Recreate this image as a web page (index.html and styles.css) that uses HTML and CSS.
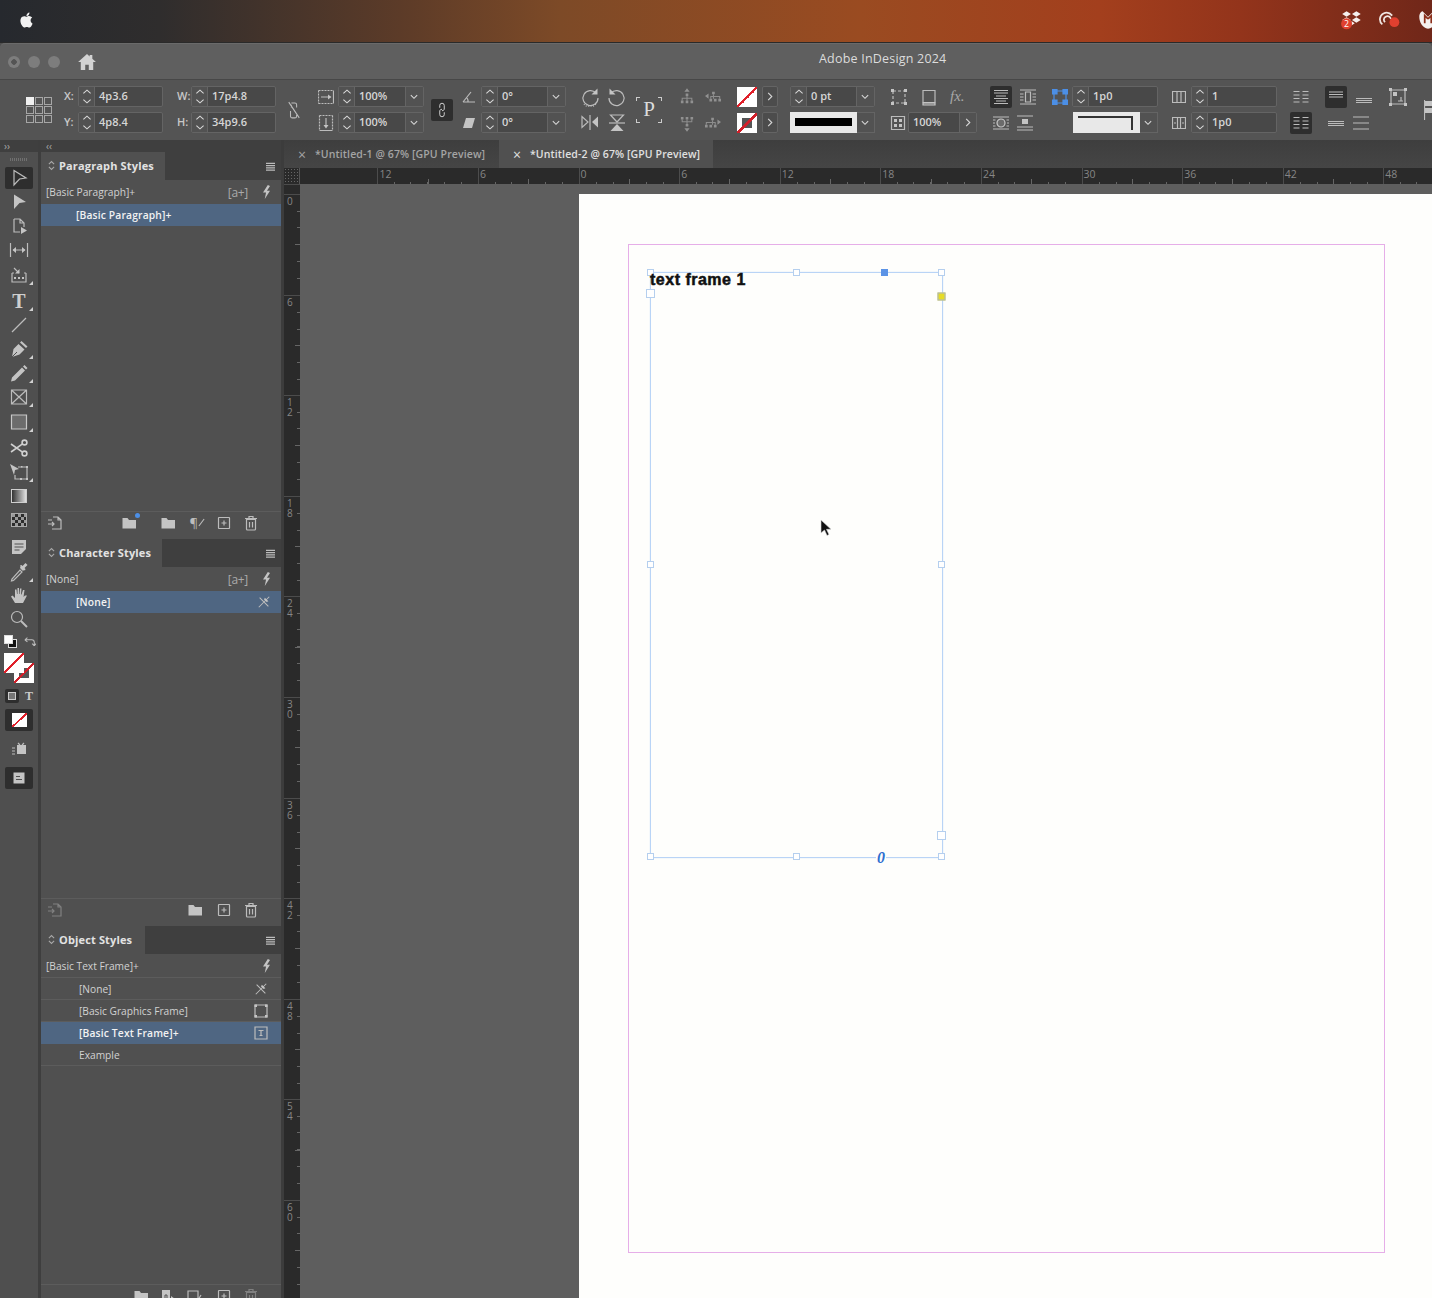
FILE: index.html
```html
<!DOCTYPE html>
<html lang="en">
<head>
    <meta charset="UTF-8">
    <title>Adobe InDesign 2024</title>
    <link rel="stylesheet" href="styles.css">
</head>
<body>
    <svg class="defs" width="0" height="0">
        <symbol id="i-step" viewBox="0 0 16 21"><path d="M4 7l4-3.500L12 7M4 14l4 3.500L12 14"/></symbol>
        <symbol id="i-down" viewBox="0 0 16 21"><path d="M4.500 9l3.500 3.500L11.500 9"/></symbol>
        <symbol id="i-right" viewBox="0 0 16 21"><path d="M6 6.500l4 4-4 4"/></symbol>
        <symbol id="i-menu" viewBox="0 0 12 10"><path d="M1 1.500h10M1 4h10M1 6.500h10M1 9h10"/></symbol>
        <symbol id="i-bolt" viewBox="0 0 14 16"><path class="solid" d="M8.500 0L3 8.500h3.500L5 16l6-9.500H7.500L11 1z"/></symbol>
        <symbol id="i-new" viewBox="0 0 16 16"><path d="M3 2.500h10a.5.5 0 0 1 .5.5v10a.5.5 0 0 1-.5.5H3a.5.5 0 0 1-.5-.5V3a.5.5 0 0 1 .5-.5zM8 5.500v5M5.500 8h5"/></symbol>
        <symbol id="i-trash" viewBox="0 0 16 16"><path d="M3.500 4.500h9v9.500a1 1 0 0 1-1 1h-7a1 1 0 0 1-1-1zM2 3.500h12M6 3.500V1.500h4v2M6.500 7v5.500M9.500 7v5.500"/></symbol>
        <symbol id="i-folder" viewBox="0 0 16 16"><path class="solid" d="M1.500 3h5l1.500 2h7v8.500h-13.500z"/></symbol>
        <symbol id="i-load" viewBox="0 0 16 16"><path d="M6 2h5l3 3v9H5M11 2v3h3M1 9h6M5 7l2 2-2 2M1 5h4"/></symbol>
        <symbol id="i-clear" viewBox="0 0 16 16"><path d="M2 14L14 2M3 3l10 10"/><path class="solid" d="M9 3l4 4-2 1-3-3z"/></symbol>
        <symbol id="i-doc" viewBox="0 0 16 16"><path class="solid" d="M2 2h8v12H2z"/><path class="cut" d="M5 7h2v4H5z"/><path class="solid" d="M11 8l4 3-1 3h-3z"/></symbol>
        <symbol id="i-check" viewBox="0 0 16 16"><path d="M1 3h10v11H1zM11 12l3-5"/></symbol>
        <symbol id="t-sel" viewBox="0 0 20 20"><path d="M5 2.500L17 10l-6.500 1L5 17z"/></symbol>
        <symbol id="t-direct" viewBox="0 0 20 20"><path class="solid" d="M5 2.500L17 10l-6.500 1L5 17z"/></symbol>
        <symbol id="t-page" viewBox="0 0 20 20"><path d="M5 3h6l4 4v4M11 3v4h4M5 3v13h6"/><path class="solid" d="M12 11l6 3.500-6 3.500z"/></symbol>
        <symbol id="t-gap" viewBox="0 0 20 20"><path d="M1.500 3v14M18.500 3v14M4 10h12"/><path class="solid" d="M7 7v6l-3.500-3zM13 7v6l3.500-3z"/></symbol>
        <symbol id="t-collect" viewBox="0 0 20 20"><path d="M3 8v9h14V8M3 8h2M15 8h2M5 3l5 5"/><path class="solid" d="M10.500 8.500V4l-4.500 4.500zM5 12h2v2H5zM9 12h2v2H9zM13 12h2v2h-2z"/></symbol>
        <symbol id="t-line" viewBox="0 0 20 20"><path d="M3 17L17 3"/></symbol>
        <symbol id="t-pen" viewBox="0 0 20 20"><path class="solid" d="M3 18l1.500-8 5-5 6 5.500-5 5zM11 3.500l1.500-1.500 6 5.500-1.500 1.500z"/><path class="cut" d="M3 18l5-5"/></symbol>
        <symbol id="t-pencil" viewBox="0 0 20 20"><path class="solid" d="M3 14.500L13 4.500l3 3L6 17.500l-4 1zM14 3.500l1.500-1.500 3 3-1.500 1.500z"/></symbol>
        <symbol id="t-frame" viewBox="0 0 20 20"><path d="M2.500 3h15v14h-15zM2.500 3l15 14M17.500 3l-15 14"/></symbol>
        <symbol id="t-rect" viewBox="0 0 20 20"><path class="gray" d="M2.500 3h15v14h-15z"/></symbol>
        <symbol id="t-scissors" viewBox="0 0 20 20"><g class="heavy"><circle cx="15.500" cy="4.500" r="2.400"/><circle cx="15.500" cy="15.500" r="2.400"/><path d="M13.500 5.800L2 14M13.500 14.200L2 6"/></g></symbol>
        <symbol id="t-free" viewBox="0 0 20 20"><path class="solid" d="M1 2l9 5-4 1-1 5z"/><path d="M9 5h9v12H6v-4"/><path class="solid" d="M17 4h2v2h-2zM17 16h2v2h-2zM11 16h2v2h-2zM12 4h1.500v1.500H12z"/></symbol>
        <symbol id="t-note" viewBox="0 0 20 20"><path class="solid" d="M3 3h14v9l-5 5H3z"/><path class="cut" d="M5.500 7h9M5.500 10h9M5.500 13h5"/></symbol>
        <symbol id="t-drop" viewBox="0 0 20 20"><path d="M3 17l-.5 2 2-.5L13 10l-2-2z"/><path class="solid" d="M11 6l3 3 1-1 1 .5.500-1.500-1-1 3-3-2-2-3 3-1-1-1.500.5.500 1z"/></symbol>
        <symbol id="t-hand" viewBox="0 0 20 20"><path class="solid" d="M6 18L2 11.500l1.500-1 2.500 2.500V4.500h1.500L8 9h.5V3H10v6h.500l.5-5.500h1.500L12 9.500h.5L14 5h1.500L14.500 12l1.500-1.500h2L14 18z"/></symbol>
        <symbol id="t-zoom" viewBox="0 0 20 20"><circle cx="8" cy="8" r="5.500"/><path d="M12 12l6 6" class="thick"/></symbol>
        <symbol id="c-chain-off" viewBox="0 0 16 24"><path d="M5 4h4a2 2 0 0 1 2 2v3M11 16v3a2 2 0 0 1-2 2H6a2 2 0 0 1-2-2v-6M5 9V6M2 3l12 18"/></symbol>
        <symbol id="c-chain" viewBox="0 0 16 22"><path d="M5 8V5a3 3 0 0 1 6 0v5a3 3 0 0 1-3 2M11 14v3a3 3 0 0 1-6 0v-5a3 3 0 0 1 3-2"/></symbol>
        <symbol id="c-sx" viewBox="0 0 16 16"><path d="M.5 1.500h15M.5 14.500h15M.5 1.500v13" stroke-dasharray="2 1"/><path d="M15.500 1.500v13M3 8h9"/><path class="solid" d="M10 5.500L13.500 8 10 10.500z"/></symbol>
        <symbol id="c-sy" viewBox="0 0 16 16"><path d="M1.500 .5v15M14.500 .5v15M1.500 .5h13" stroke-dasharray="2 1"/><path d="M1.500 15.500h13M8 3v9"/><path class="solid" d="M5.500 10L8 13.500 10.500 10z"/></symbol>
        <symbol id="c-angle" viewBox="0 0 14 14"><path d="M1 12L9 2M1 12h12M6 12a5 5 0 0 0-1-4"/></symbol>
        <symbol id="c-shear" viewBox="0 0 14 14"><path class="solid" d="M4 2h9l-3 10H1z"/></symbol>
        <symbol id="c-rot-cw" viewBox="0 0 20 20"><path d="M16 6a7.500 7.500 0 1 0 2 5"/><path class="solid" d="M17.500 1.500v6h-6z"/><path d="M4 17a7.500 7.500 0 0 0 12 0" stroke-dasharray="1 1.500"/></symbol>
        <symbol id="c-rot-ccw" viewBox="0 0 20 20"><path d="M4 6a7.500 7.500 0 1 1-2 5"/><path class="solid" d="M2.500 1.500v6h6z"/></symbol>
        <symbol id="c-flip-h" viewBox="0 0 20 20"><path d="M2 3.500v11l6-5.500zM10 2v15"/><path class="solid" d="M18 3.500v11l-6-5.500z"/></symbol>
        <symbol id="c-flip-v" viewBox="0 0 20 20"><path d="M3.500 2h13l-6.500 7z"/><path d="M2 10h16"/><path class="solid" d="M3.500 18h13l-6.500-7z"/></symbol>
        <symbol id="c-tree" viewBox="0 0 16 20"><path class="solid" d="M8 0l3 4H5zM6.500 6h3v3h-3zM1 14h3v3H1zM6.500 14h3v3h-3zM12 14h3v3h-3z"/><path d="M8 9v5M2.500 14v-2.500h11V14"/></symbol>
        <symbol id="c-tree-r" viewBox="0 0 18 18"><path class="solid" d="M0 8l4-3v6zM8 3h3v3H8zM5 11h3v3H5zM10 11h3v3h-3zM15 11h3v3h-3z"/><path d="M9.500 6v5M6.500 11V8.500h10V11"/></symbol>
        <symbol id="c-bounds" viewBox="0 0 18 18"><path d="M3 3h12v12H3z" stroke-dasharray="3 2"/><path class="solid" d="M1 1h3v3H1zM14 1h3v3h-3zM1 14h3v3H1zM14 14h3v3h-3z"/></symbol>
        <symbol id="c-square" viewBox="0 0 18 18"><path d="M3 2.500h12v12H3z"/><path class="gray" d="M3 15h12v2H3z"/></symbol>
        <symbol id="c-opacity" viewBox="0 0 16 16"><path d="M1.500 1.500h13v13h-13z"/><path class="solid" d="M4 4h3v3H4zM9 9h3v3H9zM9 4h3v3H9zM4 9h3v3H4z"/></symbol>
        <symbol id="c-wrap-a" viewBox="0 0 16 16"><path d="M1 1.500h14M1 4h14M3 7h10M1 9.500h14M3 12h10M1 14.500h14"/></symbol>
        <symbol id="c-wrap-b" viewBox="0 0 16 16"><path d="M5.500 3h5v10h-5zM0 1h16M0 15h16M0 5h3.500M0 8h3.500M0 11h3.500M12.500 5H16M12.500 8H16M12.500 11H16"/></symbol>
        <symbol id="c-wrap-c" viewBox="0 0 16 16"><circle class="gray" cx="8" cy="8" r="4"/><path d="M0 2h16M0 14h16M0 5h2.500M0 8h2M0 11h2.500M13.500 5H16M14 8h2M13.500 11H16"/></symbol>
        <symbol id="c-wrap-d" viewBox="0 0 16 16"><path d="M0 1h16M0 15h16M0 12h16"/><path class="solid" d="M5 4h6v5H5z"/></symbol>
        <symbol id="c-fit" viewBox="0 0 16 16"><path class="blue" d="M0 0h5v5H0zM11 0h5v5h-5zM0 11h5v5H0zM11 11h5v5h-5zM5 2h6M5 14h6M2 5v6M14 5v6"/></symbol>
        <symbol id="c-columns" viewBox="0 0 14 14"><path d="M.5 1.500h13v11H.5zM5 1.500v11M9 1.500v11"/></symbol>
        <symbol id="c-gutter" viewBox="0 0 14 14"><path d="M.5 1.500h13v11H.5zM5.500 1.500v11M8.500 1.500v11M2 7h2M10 7h2"/></symbol>
        <symbol id="c-list" viewBox="0 0 16 14"><path d="M.5 1.500h6M9.500 1.500h6M.5 5h6M9.500 5h6M.5 8.500h6M9.500 8.500h6M.5 12h6M9.500 12h6"/></symbol>
        <symbol id="c-top" viewBox="0 0 16 14"><path d="M1 2h14M1 4.500h14M1 7h14"/></symbol>
        <symbol id="c-mid" viewBox="0 0 16 14"><path d="M0 5.500h16M0 7.500h16M0 9.500h16"/></symbol>
        <symbol id="c-just" viewBox="0 0 16 14"><path d="M0 1h16M0 7h16M0 13h16"/></symbol>
        <symbol id="c-frame" viewBox="0 0 18 18"><path d="M2 2h14v14H2z"/><path class="solid" d="M0 0h3v3H0zM15 0h3v3h-3zM0 15h3v3H0zM15 15h3v3h-3zM4 4h4v4H4z"/><path d="M12 9v4M9 13h5"/></symbol>
        <symbol id="c-clip" viewBox="0 0 16 20"><path class="solid" d="M1 1h15v5H1zM1 8h15v5H1z"/><path d="M.5 0v20"/></symbol>
        <symbol id="c-gfx" viewBox="0 0 14 14"><path d="M1 1h12v12H1z"/><path class="solid" d="M.5.500h2.500v2.500H.5zM11 .5h2.500v2.500H11zM.5 11h2.500v2.500H.5zM11 11h2.500v2.500H11z"/></symbol>
        <symbol id="c-txt" viewBox="0 0 14 14"><path d="M1 1h12v12H1zM4.500 4.500h5M7 4.500v5M5.500 9.500h3"/></symbol>
    </svg>

    <header class="menubar">
        <svg class="apple" viewBox="0 0 24 24"><path d="M12.152 6.896c-.948 0-2.415-1.078-3.96-1.04-2.04.027-3.91 1.183-4.961 3.014-2.117 3.675-.546 9.103 1.519 12.09 1.013 1.454 2.208 3.09 3.792 3.039 1.52-.065 2.09-.987 3.935-.987 1.831 0 2.35.987 3.96.948 1.637-.026 2.676-1.48 3.676-2.948 1.156-1.688 1.636-3.325 1.662-3.415-.039-.013-3.182-1.221-3.22-4.857-.026-3.04 2.48-4.494 2.597-4.559-1.429-2.09-3.623-2.324-4.39-2.376-2-.156-3.675 1.09-4.61 1.09zM15.53 3.83c.843-1.012 1.4-2.427 1.245-3.83-1.207.052-2.662.805-3.532 1.818-.78.896-1.454 2.338-1.273 3.714 1.338.104 2.715-.688 3.559-1.701"/></svg>
        <div class="tray">
            <svg class="tray-icon" viewBox="0 0 22 18"><path class="tray-white" d="M6 1l4 2.500L6 6 2 3.500zM15 1l4 2.500L15 6l-4-2.500zM6 6.500l4 2.500-4 2.500L2 9zM15 6.500l4 2.500-4 2.500-4-2.500zM10.500 10l3 2-3 2z"/><circle class="tray-red" cx="6" cy="12.500" r="5"/><text class="tray-num" x="6" y="15.500">2</text></svg>
            <svg class="tray-icon cc" viewBox="0 0 22 18"><path class="tray-line" d="M4 13a6 6 0 0 1 1-10c3-1.500 6-.5 8 2M6.500 11a3 3 0 0 1 .5-5c2-1 4 0 5 2"/><circle class="tray-red" cx="15" cy="11" r="4.500"/></svg>
            <svg class="tray-icon mb" viewBox="0 0 22 18"><path class="tray-white" d="M3 6c0-3 2-5 3-5l5 5 5-5c2 1 4 3 4 6 0 5-4 9-9 10C6 16 3 11 3 6z"/><path class="tray-cut" d="M11 8l-3-3v7M11 8l3-3v7"/></svg>
        </div>
    </header>

    <div class="titlebar">
        <div class="lights"><span class="light first"></span><span class="light"></span><span class="light"></span></div>
        <svg class="home" viewBox="0 0 20 18"><path d="M10 0L0 9h3v9h5v-6h4v6h5V9h3l-4-3.600V1h-3v1.700z"/></svg>
        <div class="app-title">Adobe InDesign 2024</div>
    </div>

    <div class="control">
        <div class="refpoint">
            <i class="on"></i><i></i><i></i><i></i><i></i><i></i><i></i><i></i><i></i>
        </div>

        <div class="col col-xy">
            <div class="row"><label>X:</label><div class="field"><span class="step"><svg><use href="#i-step"/></svg></span><span class="val">4p3.6</span></div></div>
            <div class="row"><label>Y:</label><div class="field"><span class="step"><svg><use href="#i-step"/></svg></span><span class="val">4p8.4</span></div></div>
        </div>
        <div class="col col-wh">
            <div class="row"><label>W:</label><div class="field"><span class="step"><svg><use href="#i-step"/></svg></span><span class="val">17p4.8</span></div></div>
            <div class="row"><label>H:</label><div class="field"><span class="step"><svg><use href="#i-step"/></svg></span><span class="val">34p9.6</span></div></div>
        </div>
        <svg class="ic chain-off"><use href="#c-chain-off"/></svg>

        <div class="col col-scale">
            <div class="row"><svg class="ic s16"><use href="#c-sx"/></svg><div class="field"><span class="step"><svg><use href="#i-step"/></svg></span><span class="val">100%</span><span class="drop"><svg><use href="#i-down"/></svg></span></div></div>
            <div class="row"><svg class="ic s16"><use href="#c-sy"/></svg><div class="field"><span class="step"><svg><use href="#i-step"/></svg></span><span class="val">100%</span><span class="drop"><svg><use href="#i-down"/></svg></span></div></div>
        </div>
        <div class="dark-btn link-btn"><svg class="ic chain"><use href="#c-chain"/></svg></div>

        <div class="col col-angle">
            <div class="row"><svg class="ic s14"><use href="#c-angle"/></svg><div class="field"><span class="step"><svg><use href="#i-step"/></svg></span><span class="val">0°</span><span class="drop"><svg><use href="#i-down"/></svg></span></div></div>
            <div class="row"><svg class="ic s14"><use href="#c-shear"/></svg><div class="field"><span class="step"><svg><use href="#i-step"/></svg></span><span class="val">0°</span><span class="drop"><svg><use href="#i-down"/></svg></span></div></div>
        </div>
        <div class="col col-rotate">
            <div class="row"><svg class="ic s20"><use href="#c-rot-cw"/></svg><svg class="ic s20"><use href="#c-rot-ccw"/></svg></div>
            <div class="row"><svg class="ic s20"><use href="#c-flip-h"/></svg><svg class="ic s20"><use href="#c-flip-v"/></svg></div>
        </div>
        <div class="proxy"><span>P</span></div>
        <div class="col col-tree dim">
            <div class="row"><svg class="ic tree"><use href="#c-tree"/></svg><svg class="ic tree-r"><use href="#c-tree-r"/></svg></div>
            <div class="row"><svg class="ic tree flip-y"><use href="#c-tree"/></svg><svg class="ic tree-r flip-x"><use href="#c-tree-r"/></svg></div>
        </div>
        <div class="col col-swatch">
            <div class="row"><span class="none-swatch"></span><span class="more"><svg><use href="#i-right"/></svg></span></div>
            <div class="row"><span class="none-swatch stroke"></span><span class="more"><svg><use href="#i-right"/></svg></span></div>
        </div>
        <div class="col col-stroke">
            <div class="row"><div class="field"><span class="step"><svg><use href="#i-step"/></svg></span><span class="val">0 pt</span><span class="drop"><svg><use href="#i-down"/></svg></span></div></div>
            <div class="row"><div class="field preview"><span class="preview-box"><span class="bar"></span></span><span class="drop"><svg><use href="#i-down"/></svg></span></div></div>
        </div>
        <div class="col col-fx">
            <div class="row fx-row"><svg class="ic s18"><use href="#c-bounds"/></svg><svg class="ic s18"><use href="#c-square"/></svg><span class="fx">fx.</span></div>
            <div class="row"><svg class="ic s16"><use href="#c-opacity"/></svg><div class="field plain"><span class="val">100%</span><span class="drop"><svg><use href="#i-right"/></svg></span></div></div>
        </div>
        <div class="col col-wrap">
            <div class="row between"><span class="dark-btn"><svg class="ic s16"><use href="#c-wrap-a"/></svg></span><svg class="ic s16"><use href="#c-wrap-b"/></svg></div>
            <div class="row between inset"><svg class="ic s16"><use href="#c-wrap-c"/></svg><svg class="ic s16"><use href="#c-wrap-d"/></svg></div>
        </div>
        <div class="col col-fit">
            <div class="row"><svg class="ic s16"><use href="#c-fit"/></svg><div class="field"><span class="step"><svg><use href="#i-step"/></svg></span><span class="val">1p0</span></div></div>
            <div class="row"><div class="field preview"><span class="preview-box"><span class="corner"></span></span><span class="drop"><svg><use href="#i-down"/></svg></span></div></div>
        </div>
        <div class="col col-cols">
            <div class="row"><svg class="ic s14"><use href="#c-columns"/></svg><div class="field"><span class="step"><svg><use href="#i-step"/></svg></span><span class="val">1</span></div></div>
            <div class="row"><svg class="ic s14"><use href="#c-gutter"/></svg><div class="field"><span class="step"><svg><use href="#i-step"/></svg></span><span class="val">1p0</span></div></div>
        </div>
        <div class="col col-list">
            <div class="row"><svg class="ic s16h"><use href="#c-list"/></svg></div>
            <div class="row"><span class="dark-btn"><svg class="ic s16h"><use href="#c-list"/></svg></span></div>
        </div>
        <div class="col col-vjust">
            <div class="row between"><span class="dark-btn"><svg class="ic s16h"><use href="#c-top"/></svg></span><svg class="ic s16h low"><use href="#c-mid"/></svg></div>
            <div class="row between inset"><svg class="ic s16h"><use href="#c-mid"/></svg><svg class="ic s16h"><use href="#c-just"/></svg></div>
        </div>
        <svg class="ic frame-ic"><use href="#c-frame"/></svg>
        <svg class="ic clip-ic"><use href="#c-clip"/></svg>
    </div>

    <main class="workspace">
        <aside class="tools">
            <div class="collapse">››</div>
            <div class="grip"></div>
            <div class="tool-list">
                <div class="tool"><span class="tool-active"><svg class="ic s20"><use href="#t-sel"/></svg></span></div>
                <div class="tool"><svg class="ic s20"><use href="#t-direct"/></svg></div>
                <div class="tool"><svg class="ic s20"><use href="#t-page"/></svg></div>
                <div class="tool"><svg class="ic s20"><use href="#t-gap"/></svg></div>
                <div class="tool sub gap-1"><svg class="ic s20"><use href="#t-collect"/></svg></div>
                <div class="tool sub gap-2"><span class="tool-t">T</span></div>
                <div class="tool"><svg class="ic s20"><use href="#t-line"/></svg></div>
                <div class="tool sub"><svg class="ic s20"><use href="#t-pen"/></svg></div>
                <div class="tool sub"><svg class="ic s20"><use href="#t-pencil"/></svg></div>
                <div class="tool sub"><svg class="ic s20"><use href="#t-frame"/></svg></div>
                <div class="tool sub gap-1"><svg class="ic s20"><use href="#t-rect"/></svg></div>
                <div class="tool gap-2"><svg class="ic s20"><use href="#t-scissors"/></svg></div>
                <div class="tool sub"><svg class="ic s20"><use href="#t-free"/></svg></div>
                <div class="tool"><span class="grad-tool"></span></div>
                <div class="tool"><span class="feather-tool"></span></div>
                <div class="tool gap-3"><svg class="ic s20"><use href="#t-note"/></svg></div>
                <div class="tool sub gap-1"><svg class="ic s20"><use href="#t-drop"/></svg></div>
                <div class="tool gap-back"><svg class="ic s20"><use href="#t-hand"/></svg></div>
                <div class="tool"><svg class="ic s20"><use href="#t-zoom"/></svg></div>
            </div>
            <div class="swap-row">
                <span class="mini-swatch"><i></i><b></b></span>
                <svg class="ic swap" viewBox="0 0 14 12"><path d="M2 4h7a3 3 0 0 1 3 3v3M1 4l3-2.500M1 4l3 2.500M12 11l-2.500-2.500M12 11l2-2.500"/></svg>
            </div>
            <div class="fill-stroke">
                <span class="fs-stroke none-swatch stroke"></span>
                <span class="fs-fill none-swatch"></span>
            </div>
            <div class="target-row">
                <span class="target-box"><i></i></span>
                <span class="target-t">T</span>
            </div>
            <div class="tool-btn"><span class="none-swatch small"></span></div>
            <div class="tool-view"><svg class="ic s20" viewBox="0 0 20 20"><path class="solid" d="M8 5h9v9H8z"/><path d="M3 8h3M3 11h3M3 14h3M9 3l2 2M15 3l-2 2"/></svg></div>
            <div class="tool-btn last"><svg class="ic s20" viewBox="0 0 20 20"><path class="solid" d="M4.500 4.500h11v11h-11z"/><path class="cut" d="M7 8.500h4M7 11.500h6"/></svg></div>
        </aside>

        <section class="panels">
            <div class="collapse right">‹‹</div>

            <div class="panel para">
                <div class="panel-tabs">
                    <div class="panel-tab tab-para"><svg class="updown" viewBox="0 0 8 12"><path d="M1 4.500l3-3 3 3M1 7.500l3 3 3-3"/></svg>Paragraph Styles</div>
                    <svg class="ic burger"><use href="#i-menu"/></svg>
                </div>
                <div class="style-row head"><span>[Basic Paragraph]+</span><span class="newstyle">[a+]</span><svg class="ic bolt"><use href="#i-bolt"/></svg></div>
                <div class="style-row sel lvl1"><span>[Basic Paragraph]+</span></div>
                <div class="panel-foot">
                    <svg class="ic s16 fi-load"><use href="#i-load"/></svg>
                    <span class="fi-group"><svg class="ic s16"><use href="#i-folder"/></svg><i class="blue-dot"></i></span>
                    <svg class="ic s16 fi-folder"><use href="#i-folder"/></svg>
                    <span class="para-mark">¶<svg class="ic pm" viewBox="0 0 8 10"><path d="M1 9l6-8"/></svg></span>
                    <svg class="ic s16"><use href="#i-new"/></svg>
                    <svg class="ic s16"><use href="#i-trash"/></svg>
                </div>
            </div>

            <div class="panel char">
                <div class="panel-tabs">
                    <div class="panel-tab tab-char"><svg class="updown" viewBox="0 0 8 12"><path d="M1 4.500l3-3 3 3M1 7.500l3 3 3-3"/></svg>Character Styles</div>
                    <svg class="ic burger"><use href="#i-menu"/></svg>
                </div>
                <div class="style-row head"><span>[None]</span><span class="newstyle">[a+]</span><svg class="ic bolt"><use href="#i-bolt"/></svg></div>
                <div class="style-row sel lvl1"><span>[None]</span><svg class="ic row-ic"><use href="#i-clear"/></svg></div>
                <div class="panel-foot">
                    <svg class="ic s16 fi-load dimmed"><use href="#i-load"/></svg>
                    <svg class="ic s16 fi-folder"><use href="#i-folder"/></svg>
                    <svg class="ic s16"><use href="#i-new"/></svg>
                    <svg class="ic s16"><use href="#i-trash"/></svg>
                </div>
            </div>

            <div class="panel object">
                <div class="panel-tabs">
                    <div class="panel-tab tab-obj"><svg class="updown" viewBox="0 0 8 12"><path d="M1 4.500l3-3 3 3M1 7.500l3 3 3-3"/></svg>Object Styles</div>
                    <svg class="ic burger"><use href="#i-menu"/></svg>
                </div>
                <div class="style-row head ruled"><span>[Basic Text Frame]+</span><svg class="ic bolt"><use href="#i-bolt"/></svg></div>
                <div class="style-row lvl2 ruled"><span>[None]</span><svg class="ic row-ic"><use href="#i-clear"/></svg></div>
                <div class="style-row lvl2 ruled"><span>[Basic Graphics Frame]</span><svg class="ic row-ic"><use href="#c-gfx"/></svg></div>
                <div class="style-row lvl2 sel"><span>[Basic Text Frame]+</span><svg class="ic row-ic"><use href="#c-txt"/></svg></div>
                <div class="style-row lvl2 ruled"><span>Example</span></div>
                <div class="panel-foot">
                    <svg class="ic s16"><use href="#i-folder"/></svg>
                    <svg class="ic s16"><use href="#i-doc"/></svg>
                    <svg class="ic s16 fi-folder"><use href="#i-check"/></svg>
                    <svg class="ic s16"><use href="#i-new"/></svg>
                    <svg class="ic s16 dimmed"><use href="#i-trash"/></svg>
                </div>
            </div>
        </section>

        <section class="document">
            <div class="doc-tabs">
                <div class="doc-tab first"><span class="x">×</span>*Untitled-1 @ 67% [GPU Preview]</div>
                <div class="doc-tab active"><span class="x">×</span>*Untitled-2 @ 67% [GPU Preview]</div>
            </div>
            <div class="h-ruler">
                <div class="corner-box"></div>
                <div class="h-lead"></div>
                <div class="h-cell">12</div>
                <div class="h-cell">6</div>
                <div class="h-cell">0</div>
                <div class="h-cell">6</div>
                <div class="h-cell">12</div>
                <div class="h-cell">18</div>
                <div class="h-cell">24</div>
                <div class="h-cell">30</div>
                <div class="h-cell">36</div>
                <div class="h-cell">42</div>
                <div class="h-cell">48</div>
            </div>
            <div class="doc-body">
                <div class="v-ruler">
                    <div class="v-lead"></div>
                    <div class="v-cell">0</div>
                    <div class="v-cell">6</div>
                    <div class="v-cell">12</div>
                    <div class="v-cell">18</div>
                    <div class="v-cell">24</div>
                    <div class="v-cell">30</div>
                    <div class="v-cell">36</div>
                    <div class="v-cell">42</div>
                    <div class="v-cell">48</div>
                    <div class="v-cell">54</div>
                    <div class="v-cell">60</div>
                </div>
                <div class="pasteboard">
                    <div class="page">
                        <div class="margins"></div>
                        <div class="frame">
                            <i class="handle tl"></i><i class="handle tc"></i><i class="handle tr"></i>
                            <i class="handle ml"></i><i class="handle mr"></i>
                            <i class="handle bl"></i><i class="handle bc"></i><i class="handle br"></i>
                            <i class="handle in-port"></i><i class="handle out-port"></i>
                            <i class="handle blue-h"></i><i class="handle yellow-h"></i>
                            <div class="frame-text">text frame 1</div>
                            <span class="overset">0</span>
                        </div>
                        <svg class="cursor" viewBox="0 0 12 18"><path d="M1 1v13l3.500-3 2.500 5.500 2-1-2.500-5.200H11z"/></svg>
                    </div>
                </div>
            </div>
        </section>
    </main>
</body>
</html>
```

FILE: styles.css
```css
* {
    margin: 0;
    padding: 0;
    box-sizing: border-box;
}

html, body {
    height: 1298px;
    overflow: hidden;
}

body {
    font-family: 'Open Sans', 'Noto Sans', sans-serif;
    background: #505050;
    color: #d0d0d0;
    font-size: 11px;
}

.defs {
    position: absolute;
}

/* shared icon look */
svg {
    fill: none;
    stroke: #bcbcbc;
    stroke-width: 1.2;
    display: block;
}

symbol .solid, svg .solid {
    fill: #c4c4c4;
    stroke: none;
}

symbol .gray, svg .gray {
    fill: #6c6c6c;
    stroke: #c8c8c8;
}

symbol .cut, svg .cut {
    stroke: #505050;
    stroke-width: 1;
}

symbol .blue {
    fill: #4c8fe6;
    stroke: #4c8fe6;
}

symbol .thick {
    stroke-width: 2;
}

symbol .heavy {
    stroke: #d0d0d0;
    stroke-width: 1.600;
}

.ic {
    flex: none;
}

.s14 { width: 14px; height: 14px; }
.s16 { width: 16px; height: 16px; }
.s16h { width: 16px; height: 14px; }
.s18 { width: 18px; height: 18px; }
.s20 { width: 20px; height: 20px; }

/* mac menu bar */
.menubar {
    height: 43px;
    display: flex;
    align-items: center;
    justify-content: space-between;
    background: linear-gradient(90deg, #26292e 0, #2f2d2d 160px, #5c3b28 400px, #7d4a27 560px, #9a4b21 860px, #a33f1d 1100px, #93341b 1240px, #702719 1432px);
    border-bottom: 1px solid #2a2a2a;
}

.apple {
    width: 15px;
    height: 16px;
    margin-left: 19px;
    margin-top: -3px;
    fill: #f2f2f2;
    stroke: none;
}

.tray {
    display: flex;
    align-items: center;
    gap: 14px;
    margin-right: -8px;
    margin-top: -3px;
}

.tray-icon {
    width: 24px;
    height: 20px;
    stroke: none;
}

.tray-white { fill: #f5f0ee; stroke: none; }
.tray-red { fill: #e0402f; stroke: none; }
.tray-line { stroke: #f0e6e2; stroke-width: 1.600; fill: none; }
.tray-cut { stroke: #8c2f1b; stroke-width: 1.600; fill: none; }
.tray-num { fill: #fff; stroke: none; font-size: 8px; text-anchor: middle; }

/* window title */
.titlebar {
    height: 37px;
    display: flex;
    align-items: center;
    background: #5f5f5f;
    border-top: 1px solid #6a6a6a;
    border-bottom: 1px solid #474747;
    border-radius: 5px 5px 0 0;
    padding-left: 8px;
}

.lights {
    display: flex;
    gap: 8px;
}

.light {
    width: 12px;
    height: 12px;
    border-radius: 50%;
    background: #7d7d7d;
}

.light.first {
    background: radial-gradient(circle, #545454 0 2.500px, #7d7d7d 3px);
}

.home {
    width: 18px;
    height: 16px;
    margin-left: 18px;
    fill: #d2d2d2;
    stroke: none;
}

.app-title {
    margin-left: 723px;
    margin-top: -7px;
    font-size: 12.500px;
    color: #dcdcdc;
    letter-spacing: 0.200px;
    white-space: nowrap;
}

/* control panel */
.control {
    height: 60px;
    display: flex;
    align-items: center;
    background: #545454;
    padding-left: 26px;
    padding-bottom: 1px;
    overflow: hidden;
}

.refpoint {
    width: 27px;
    height: 26px;
    flex: none;
    display: grid;
    grid-template-columns: repeat(3, 8px);
    grid-auto-rows: 8px;
    gap: 1px;
}

.refpoint i {
    border: 1px solid #a6a6a6;
}

.refpoint i.on {
    background: #f0f0f0;
    border-color: #f0f0f0;
}

.col {
    display: flex;
    flex-direction: column;
    gap: 5px;
    flex: none;
}

.row {
    height: 21px;
    display: flex;
    align-items: center;
}

.between {
    justify-content: space-between;
}

.inset {
    padding: 0 3px;
}

.row label {
    width: 14px;
    flex: none;
    font-size: 11px;
    font-weight: 600;
    color: #c8c8c8;
    margin-top: -2px;
}

.field {
    height: 21px;
    flex: 1;
    display: flex;
    align-items: center;
    background: #484848;
    border: 1px solid #646464;
    border-radius: 2px;
    color: #d6d6d6;
    font-size: 11px;
    font-weight: 600;
}

.step {
    width: 16px;
    height: 100%;
    flex: none;
    border-right: 1px solid #646464;
    background: #525252;
}

.step svg, .drop svg, .more svg {
    width: 16px;
    height: 19px;
    stroke: #d8d8d8;
}

.val {
    flex: 1;
    padding-left: 4px;
    margin-top: -2px;
}

.drop {
    width: 18px;
    height: 100%;
    flex: none;
    border-left: 1px solid #646464;
    background: #525252;
}

.field.plain .drop {
    width: 17px;
}

.field.preview {
    border: none;
    background: #505050;
}

.preview-box {
    flex: 1;
    height: 100%;
    background: #e8e8e8;
    padding: 4px 5px;
    position: relative;
}

.preview-box .bar {
    display: block;
    height: 8px;
    margin-top: 2px;
    background: #000;
}

.preview-box .corner {
    display: block;
    height: 14px;
    border-top: 2px solid #333;
    border-right: 2px solid #333;
    margin-right: 2px;
}

.field.preview .drop {
    border: 1px solid #646464;
    border-left: none;
}

.col-xy { margin-left: 11px; width: 99px; }
.col-wh { margin-left: 14px; width: 99px; }
.chain-off { width: 14px; height: 22px; margin-left: 11px; }
.col-scale { margin-left: 17px; width: 106px; }
.col-scale .field { margin-left: 4px; }
.link-btn { margin-left: 7px; }
.col-angle { margin-left: 9px; width: 104px; }
.col-angle .field { margin-left: 5px; }
.col-rotate { margin-left: 14px; width: 47px; }
.col-rotate .row { justify-content: space-between; }
.proxy { margin-left: 9px; }
.col-tree { margin-left: 18px; width: 42px; }
.col-tree .row { justify-content: space-between; }
.col-swatch { margin-left: 15px; width: 40px; }
.col-stroke { margin-left: 13px; width: 85px; }
.col-fx { margin-left: 15px; width: 87px; }
.col-fx .field { margin-left: 2px; }
.fx-row { gap: 12px; }
.col-wrap { margin-left: 13px; width: 46px; }
.col-fit { margin-left: 16px; width: 106px; }
.col-fit .field { margin-left: 4px; }
.col-fit .field.preview { margin-left: 21px; }
.col-cols { margin-left: 14px; width: 105px; }
.col-cols .field { margin-left: 5px; }
.col-list { margin-left: 13px; width: 22px; align-items: center; }
.col-vjust { margin-left: 13px; width: 47px; }
.frame-ic { width: 18px; height: 18px; margin-left: 17px; margin-bottom: 26px; }
.clip-ic { width: 16px; height: 48px; margin-left: 17px; }

.dim svg {
    opacity: 0.55;
}

.tree { width: 14px; height: 18px; }
.tree-r { width: 18px; height: 16px; }
.flip-y { transform: scaleY(-1); }
.flip-x { transform: scaleX(-1); }
.low { margin-top: 6px; }

.dark-btn {
    width: 22px;
    height: 22px;
    flex: none;
    display: flex;
    align-items: center;
    justify-content: center;
    background: #2e2e2e;
    border-radius: 2px;
}

.chain { width: 12px; height: 18px; stroke: #e0e0e0; }

.proxy {
    width: 26px;
    height: 26px;
    flex: none;
    display: flex;
    align-items: center;
    justify-content: center;
    font-family: 'Liberation Serif', serif;
    font-size: 21px;
    color: #dcdcdc;
    background:
        linear-gradient(#ccc, #ccc) 0 0 / 4px 1px no-repeat,
        linear-gradient(#ccc, #ccc) 0 0 / 1px 4px no-repeat,
        linear-gradient(#ccc, #ccc) 100% 0 / 4px 1px no-repeat,
        linear-gradient(#ccc, #ccc) 100% 0 / 1px 4px no-repeat,
        linear-gradient(#ccc, #ccc) 0 100% / 4px 1px no-repeat,
        linear-gradient(#ccc, #ccc) 0 100% / 1px 4px no-repeat,
        linear-gradient(#ccc, #ccc) 100% 100% / 4px 1px no-repeat,
        linear-gradient(#ccc, #ccc) 100% 100% / 1px 4px no-repeat;
}

.none-swatch {
    width: 20px;
    height: 20px;
    flex: none;
    display: block;
    background: linear-gradient(to bottom right, #fff 46%, #e0202a 46%, #e0202a 55%, #fff 55%);
}

.none-swatch.stroke {
    background:
        linear-gradient(to bottom right, transparent 46%, #d0202a 46%, #d0202a 55%, transparent 55%),
        linear-gradient(#555, #555) center / 10px 10px no-repeat,
        #fff;
}

.more {
    width: 16px;
    height: 21px;
    margin-left: 5px;
    flex: none;
    background: #4c4c4c;
    border: 1px solid #646464;
    border-radius: 2px;
}

.more svg {
    margin-left: -1px;
}

.fx {
    font-family: 'Liberation Serif', serif;
    font-style: italic;
    font-size: 15px;
    color: #a8a8a8;
}

/* workspace */
.workspace {
    height: 1158px;
    display: flex;
    overflow: hidden;
}

.collapse {
    height: 12px;
    line-height: 12px;
    font-size: 10px;
    color: #a8a8a8;
    padding-left: 4px;
    background: #3f3f3f;
}

.collapse.right {
    padding-left: 5px;
}

.tools {
    width: 41px;
    flex: none;
    background: #4f4f4f;
    border-right: 3px solid #3e3e3e;
}

.grip {
    height: 14px;
    margin: 0 10px;
    background: repeating-linear-gradient(90deg, #707070 0 1px, transparent 1px 2px) center / 100% 3px no-repeat;
}

.tool {
    height: 24px;
    position: relative;
    display: flex;
    align-items: center;
    justify-content: center;
}

.tool.sub::after {
    content: "";
    position: absolute;
    right: 5px;
    bottom: 2px;
    border-left: 4px solid transparent;
    border-bottom: 4px solid #d0d0d0;
}

.gap-1 { margin-top: 1px; }
.gap-2 { margin-top: 2px; }
.gap-3 { margin-top: 3px; }
.gap-back { margin-top: -1px; }

.tool-active {
    width: 28px;
    height: 22px;
    display: flex;
    align-items: center;
    justify-content: center;
    background: #2e2e2e;
    border-radius: 2px;
}

.tool-t {
    font-family: 'Liberation Serif', serif;
    font-weight: 700;
    font-size: 20px;
    color: #cfcfcf;
}

.grad-tool {
    width: 16px;
    height: 14px;
    border: 1px solid #cfcfcf;
    background: linear-gradient(90deg, #333, #e0e0e0);
}

.feather-tool {
    width: 16px;
    height: 14px;
    background:
        repeating-conic-gradient(#2c2c2c 0 25%, #9a9a9a 0 50%) 0 0 / 6px 6px;
    border: 1px solid #aaa;
}

.swap-row {
    height: 20px;
    display: flex;
    align-items: center;
    padding-left: 4px;
    gap: 7px;
}

.mini-swatch {
    width: 13px;
    height: 13px;
    position: relative;
    display: block;
}

.mini-swatch i, .mini-swatch b {
    position: absolute;
    width: 9px;
    height: 9px;
    border: 1px solid #ddd;
}

.mini-swatch i { right: 0; bottom: 0; background: #111; }
.mini-swatch b { left: 0; top: 0; background: #fff; }

.swap {
    width: 12px;
    height: 11px;
}

.fill-stroke {
    width: 32px;
    height: 30px;
    margin: 2px 0 0 4px;
    position: relative;
}

.fs-fill, .fs-stroke {
    position: absolute;
}

.fs-fill { left: 0; top: 0; }
.fs-stroke { left: 10px; top: 10px; }

.target-row {
    height: 16px;
    margin-top: 5px;
    display: flex;
    align-items: center;
    padding-left: 5px;
    gap: 6px;
}

.target-box {
    width: 14px;
    height: 14px;
    padding: 3px;
    background: #2e2e2e;
    border-radius: 2px;
}

.target-box i {
    display: block;
    height: 8px;
    background: #777;
    border: 1px solid #ccc;
}

.target-t {
    font-family: 'Liberation Serif', serif;
    font-weight: 700;
    font-size: 12px;
    color: #ccc;
}

.tool-btn {
    width: 28px;
    height: 22px;
    margin: 5px 0 0 5px;
    background: #2e2e2e;
    border-radius: 2px;
    display: flex;
    align-items: center;
    justify-content: center;
}

.none-swatch.small {
    width: 15px;
    height: 14px;
}

.tool-view {
    height: 25px;
    margin-top: 6px;
    display: flex;
    align-items: center;
    justify-content: center;
}

.tool-btn.last {
    margin-top: 5px;
}

/* style panels */
.panels {
    width: 243px;
    flex: none;
    border-right: 3px solid #3c3c3c;
}

.panel {
    display: flex;
    flex-direction: column;
    background: #505050;
}

.panel.para { height: 384px; }
.panel.char { height: 384px; margin-top: 3px; }
.panel.object { height: 383px; margin-top: 3px; }

.panel-tabs {
    height: 28px;
    flex: none;
    display: flex;
    align-items: center;
    justify-content: space-between;
    background: #3f3f3f;
}

.panel-tab {
    height: 100%;
    display: flex;
    align-items: center;
    gap: 4px;
    padding-left: 7px;
    padding-bottom: 2px;
    background: #505050;
    font-size: 11px;
    font-weight: 700;
    letter-spacing: 0.150px;
    color: #e2e2e2;
}

.tab-para { width: 124px; }
.tab-char { width: 121px; }
.tab-obj { width: 104px; }

.updown {
    width: 7px;
    height: 11px;
    stroke: #a8a8a8;
}

.burger {
    width: 11px;
    height: 9px;
    margin-right: 5px;
}

.style-row {
    height: 22px;
    flex: none;
    display: flex;
    align-items: center;
    padding-left: 5px;
    padding-right: 13px;
    font-size: 10.200px;
    color: #d2d2d2;
}

.style-row span:first-child {
    flex: 1;
}

.style-row.head {
    height: 24px;
    padding-right: 8px;
}

.style-row.lvl1 { padding-left: 35px; padding-right: 10px; }
.style-row.lvl2 { padding-left: 38px; }

.style-row.ruled {
    border-bottom: 1px solid #5c5c5c;
}

.style-row.sel {
    background: #4f6682;
    color: #f2f2f2;
    font-weight: 600;
    font-size: 10.300px;
    letter-spacing: 0.150px;
}

.newstyle {
    margin-right: 12px;
    font-size: 12px;
    letter-spacing: -0.300px;
    color: #aaaaaa;
}

.bolt {
    width: 13px;
    height: 14px;
}

.row-ic {
    width: 14px;
    height: 14px;
}

.panel-foot {
    height: 25px;
    margin-top: auto;
    flex: none;
    display: flex;
    align-items: center;
    justify-content: flex-end;
    gap: 11px;
    padding-right: 22px;
    padding-bottom: 3px;
    border-top: 1px solid #5c5c5c;
    position: relative;
}

.fi-load {
    position: absolute;
    left: 6px;
    top: 3px;
}

.fi-folder {
    margin-right: 2px;
}

.dimmed {
    opacity: 0.45;
}

.fi-group {
    position: relative;
    margin-right: 12px;
}

.blue-dot {
    position: absolute;
    right: -3px;
    top: -2px;
    width: 5px;
    height: 5px;
    border-radius: 50%;
    background: #4c8fe6;
}

.para-mark {
    display: flex;
    align-items: center;
    font-size: 13px;
    color: #bcbcbc;
}

.pm {
    width: 7px;
    height: 9px;
}

/* document area */
.document {
    flex: 1;
    min-width: 0;
    display: flex;
    flex-direction: column;
}

.doc-tabs {
    height: 28px;
    flex: none;
    display: flex;
    background: linear-gradient(#3e3e3e, #454545);
}

.doc-tab {
    display: flex;
    align-items: center;
    font-size: 10.500px;
    font-weight: 600;
    letter-spacing: 0.110px;
    color: #a4a4a4;
    white-space: nowrap;
}

.doc-tab.first {
    width: 215px;
    padding-left: 14px;
}

.doc-tab.active {
    width: 214px;
    padding-left: 14px;
    background: #505050;
    color: #e0e0e0;
}

.x {
    font-size: 14px;
    font-weight: 400;
    width: 17px;
}

.h-ruler {
    height: 16px;
    flex: none;
    display: flex;
    background: #2a2a2a;
    overflow: hidden;
}

.corner-box {
    width: 16px;
    flex: none;
    background: #2a2a2a;
    border-right: 1px solid #555;
    background-image: radial-gradient(#666 0.500px, transparent 1px);
    background-size: 3px 3px;
}

.h-lead {
    width: 77.400px;
    flex: none;
}

.h-cell {
    width: 100.600px;
    flex: none;
    padding-left: 1px;
    font-size: 10.500px;
    line-height: 13px;
    color: #868686;
    border-left: 1px solid #4c4c4c;
    background:
        linear-gradient(#666, #666) 50% 100% / 1px 5px no-repeat,
        repeating-linear-gradient(90deg, transparent 0 15.800px, #666 15.800px 16.800px) bottom / 100% 2px no-repeat;
}

.doc-body {
    flex: 1;
    min-height: 0;
    display: flex;
}

.v-ruler {
    width: 16px;
    flex: none;
    background: #2a2a2a;
    overflow: hidden;
    border-top: 1px solid #4c4c4c;
}

.v-lead {
    height: 9px;
    background: repeating-linear-gradient(transparent 0 15.800px, #666 15.800px 16.800px) right / 3px 100% no-repeat;
}

.v-cell {
    height: 100.600px;
    padding: 1px 7px 0 3px;
    font-size: 10px;
    line-height: 10px;
    word-break: break-all;
    color: #868686;
    border-top: 1px solid #4c4c4c;
    background:
        linear-gradient(#666, #666) 100% 50% / 5px 1px no-repeat,
        repeating-linear-gradient(transparent 0 15.800px, #666 15.800px 16.800px) right / 3px 100% no-repeat;
}

.pasteboard {
    flex: 1;
    min-width: 0;
    overflow: hidden;
    background: #5e5e5e;
    padding: 10px 0 0 279px;
}

/* page is a free canvas */
.page {
    width: 860px;
    height: 1120px;
    position: relative;
    background: #fefefc;
}

.margins {
    position: absolute;
    left: 49px;
    top: 50px;
    width: 757px;
    height: 1009px;
    border: 1px solid #e6aee8;
}

.frame {
    position: absolute;
    left: 71px;
    top: 78px;
    width: 293px;
    height: 586px;
    border: 1px solid #b9d4f6;
    box-shadow: 0 0 1px #c4dafa;
}

.frame-text {
    position: relative;
    margin: -1px 0 0 -1px;
    font-family: 'Liberation Sans', Arial, sans-serif;
    font-weight: 700;
    font-size: 16px;
    line-height: 16px;
    letter-spacing: 0.500px;
    color: #111;
    -webkit-text-stroke: 0.500px #111;
}

.handle {
    position: absolute;
    width: 7px;
    height: 7px;
    transform: translate(calc(-50% - 0.500px), calc(-50% - 0.500px));
    background: #fff;
    border: 1px solid #b5cfee;
}

.tl { left: 0; top: 0; }
.tc { left: 50%; top: 0; }
.tr { left: 100%; top: 0; }
.ml { left: 0; top: 50%; }
.mr { left: 100%; top: 50%; }
.bl { left: 0; top: 100%; }
.bc { left: 50%; top: 100%; }
.br { left: 100%; top: 100%; }

.in-port {
    left: 0;
    top: 21px;
    width: 9px;
    height: 9px;
}

.out-port {
    left: 100%;
    top: 563px;
    width: 9px;
    height: 9px;
}

.blue-h {
    left: 234px;
    top: 0;
    background: #5b93e6;
    border-color: #5b93e6;
}

.yellow-h {
    left: 100%;
    top: 24px;
    width: 8px;
    height: 8px;
    background: #e6dc28;
    border-color: #a8b4c4;
}

.overset {
    position: absolute;
    left: 225px;
    top: 100%;
    transform: translateY(-50%);
    padding: 0 1px;
    background: #fefefc;
    font-family: 'Liberation Serif', serif;
    font-style: italic;
    font-weight: 700;
    font-size: 16px;
    line-height: 15px;
    color: #2f6fd0;
}

.cursor {
    position: absolute;
    left: 241px;
    top: 325px;
    width: 12px;
    height: 18px;
    fill: #111;
    stroke: #d8d8d8;
    stroke-width: 0.600;
}
```
